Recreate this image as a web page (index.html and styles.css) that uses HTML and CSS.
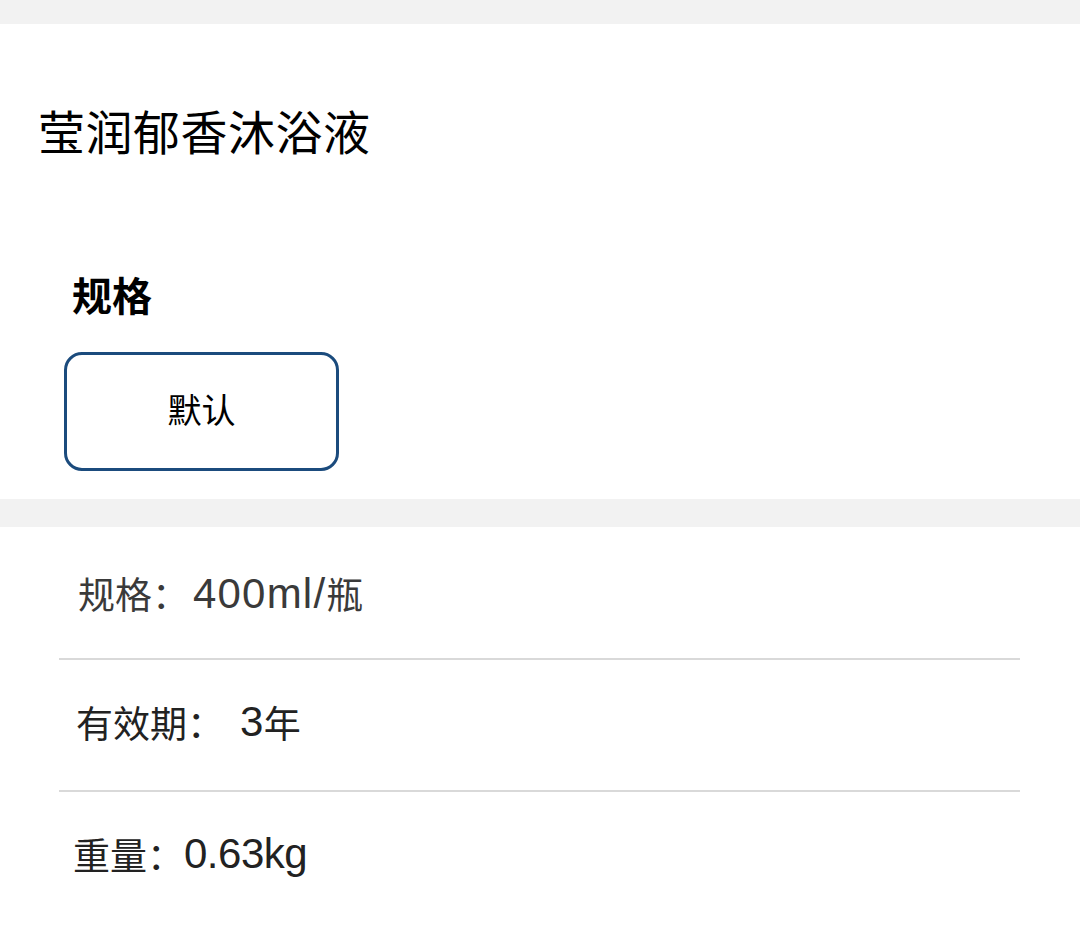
FILE: index.html
```html
<!DOCTYPE html>
<html lang="zh">
<head>
<meta charset="utf-8">
<title>莹润郁香沐浴液</title>
<link rel="stylesheet" href="styles.css">
</head>
<body>
<div class="band band-top"></div>
<section class="head">
  <h1 class="title">莹润郁香沐浴液</h1>
  <h2 class="spec-label">规格</h2>
  <div class="options">
    <div class="option selected">默认</div>
  </div>
</section>
<div class="band band-mid"></div>
<section class="attrs">
  <div class="row row-1"><span class="key">规格：</span><span class="val wide">400ml/</span><span class="key">瓶</span></div>
  <div class="row row-2"><span class="key">有效期：</span><span class="val gap">3</span><span class="key">年</span></div>
  <div class="row row-3"><span class="key">重量：</span><span class="val tight">0.63kg</span></div>
</section>
</body>
</html>
```
FILE: styles.css
```css
html, body {
  margin: 0;
  padding: 0;
  background: #ffffff;
}
body {
  font-family: "Noto Sans CJK SC", "Noto Sans", sans-serif;
  color: #000;
  width: 1080px;
  height: 927px;
  overflow: hidden;
}
.band {
  background: #f2f2f2;
}
.band-top {
  height: 24px;
}
.band-mid {
  height: 28px;
}
.head {
  padding: 77px 0 28px 0;
}
.title {
  margin: 0 0 0 38px;
  font-size: 47px;
  font-weight: 400;
  line-height: 58px;
  letter-spacing: 0.5px;
}
.spec-label {
  margin: 110px 0 0 72px;
  font-size: 40px;
  font-weight: 700;
  line-height: 50px;
}
.options {
  display: flex;
  margin: 33px 0 0 64px;
}
.option {
  box-sizing: border-box;
  width: 275px;
  height: 119px;
  border: 3px solid #1b4b7d;
  border-radius: 18px;
  display: flex;
  align-items: center;
  justify-content: center;
  font-size: 34px;
  line-height: 1;
  padding-bottom: 6px;
}
.attrs {
  margin: 0 60px 0 59px;
}
.row {
  box-sizing: border-box;
  height: 132px;
  display: flex;
  align-items: center;
  font-size: 36px;
  color: #222;
  border-bottom: 2px solid #d9d9d9;
}
.key {
  font-family: "Noto Sans CJK SC", sans-serif;
  font-size: 37px;
  line-height: 1;
}
.val {
  font-family: "Liberation Sans", "Noto Sans CJK SC", sans-serif;
  font-size: 42px;
  line-height: 1;
  letter-spacing: 0.5px;
  margin-left: 4px;
}
.val.wide {
  letter-spacing: 1.2px;
}
.val.gap {
  margin-left: 16px;
}
.val.tight {
  margin-left: 0;
  letter-spacing: -0.5px;
}
.row-1 {
  height: 133px;
  padding: 2px 0 0 19px;
  color: #3a3a3a;
}
.row-2 {
  padding: 0 0 6px 17px;
}
.row-3 {
  padding: 0 0 8px 14px;
  border-bottom: none;
}
```
